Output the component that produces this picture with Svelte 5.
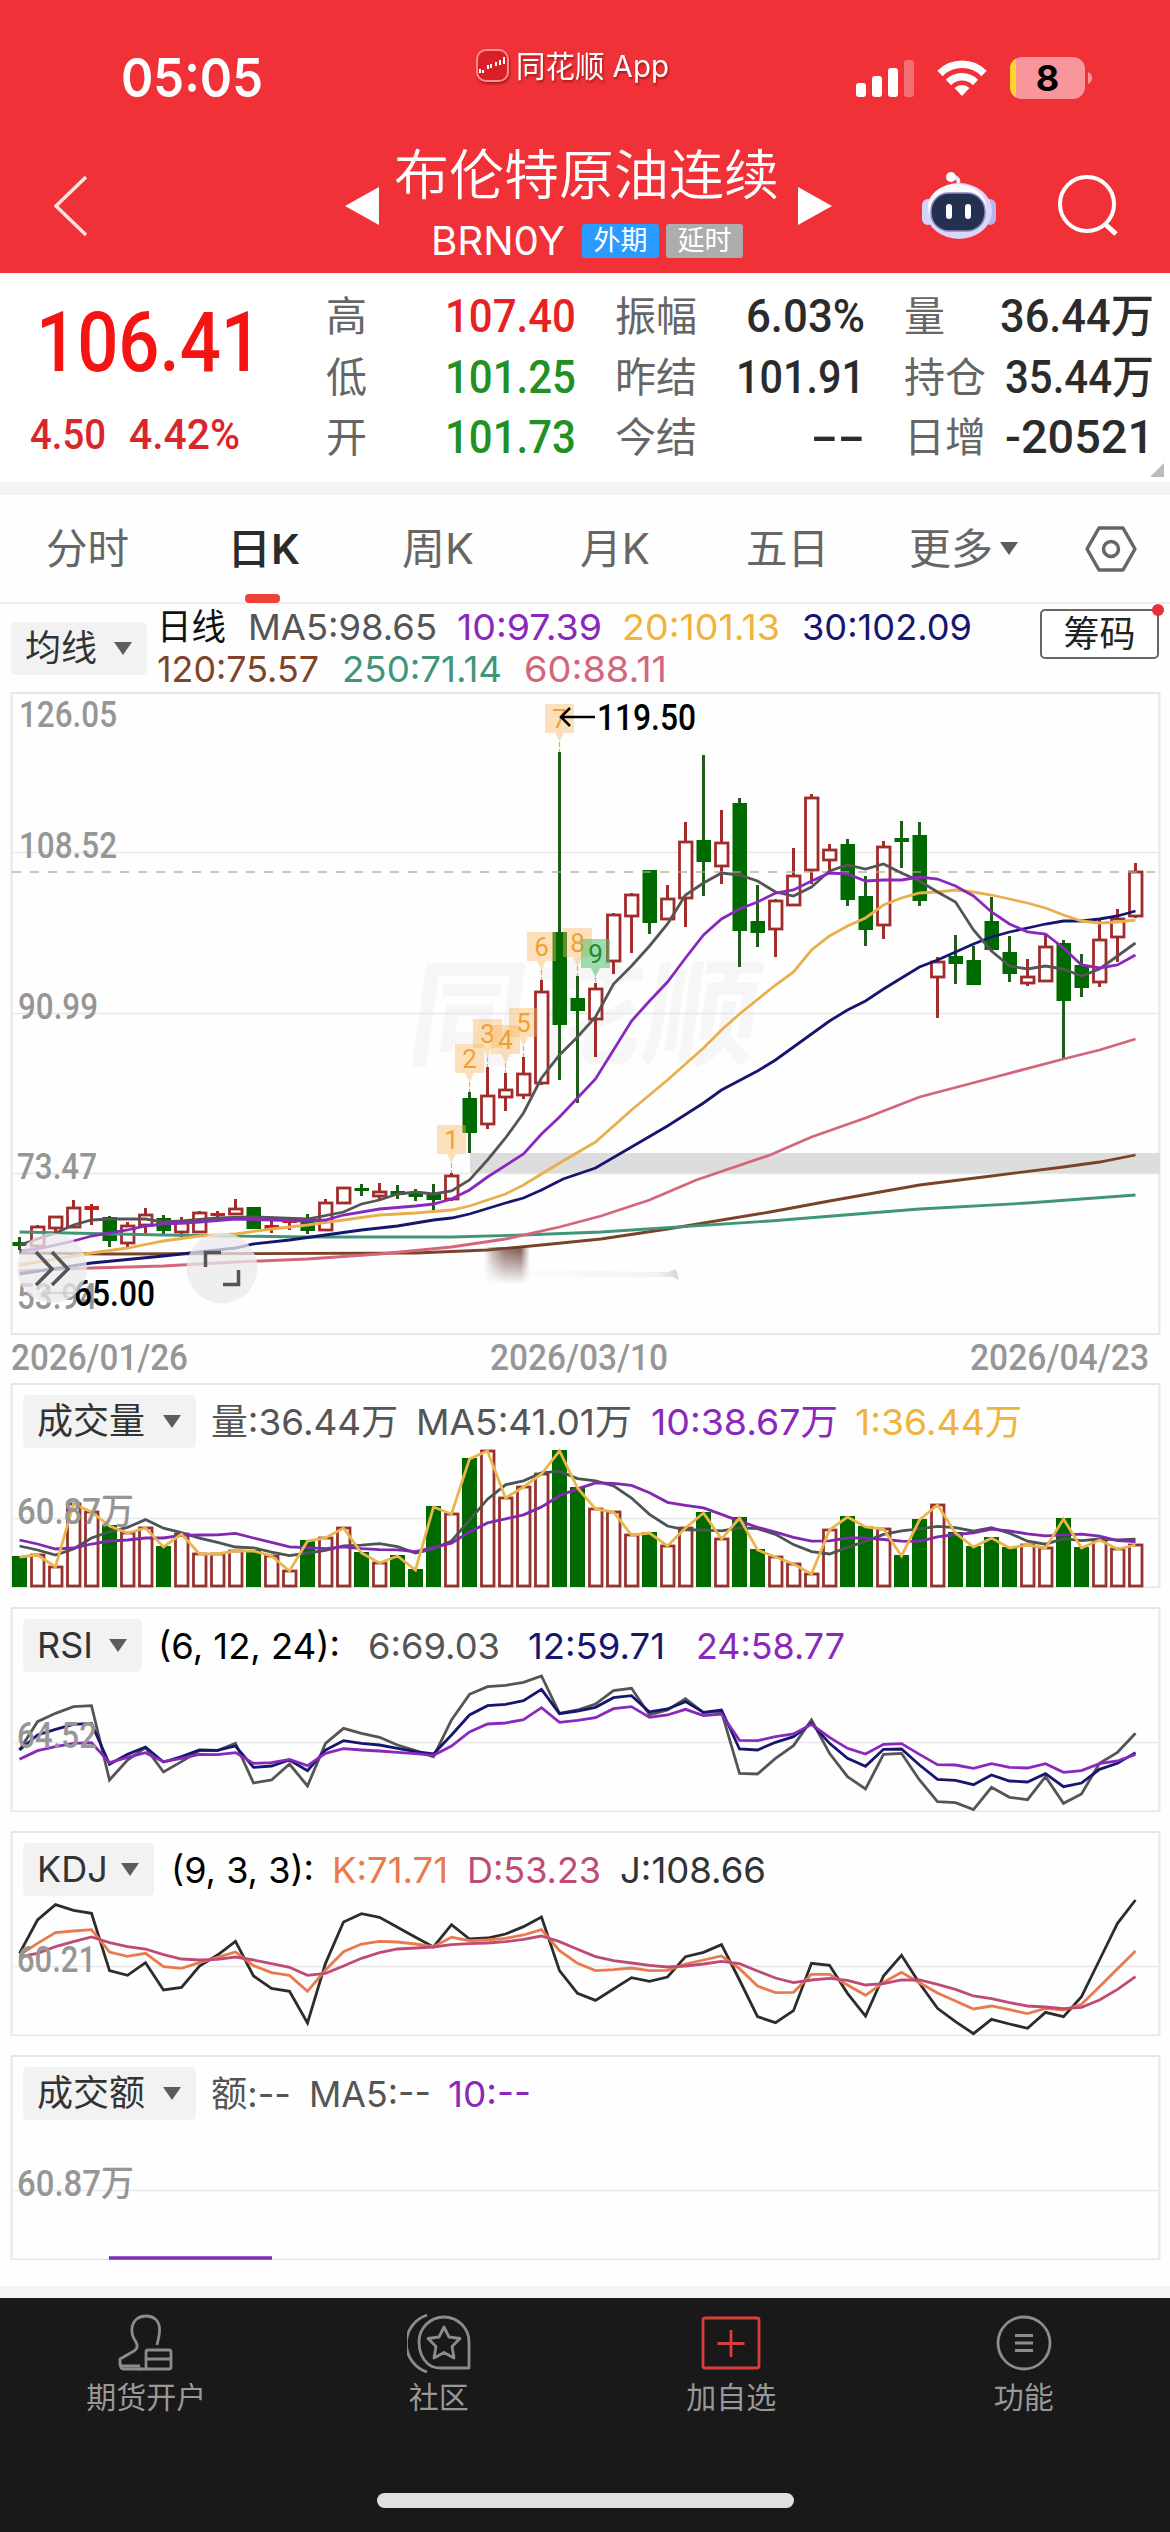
<script lang="ts">
  type Item = [text: string, width: number, color: string, gap: number]

  const FIRST = 19.5
  const STEP = 18
  const cx = (i: number) => FIRST + STEP * i

  // [kind, high, body top, body bottom, low]; r = hollow red, d = solid red, g = green
  const candles: [string, number, number, number, number][] = [
    ['g', 1237, 1242, 1246, 1250], ['r', 1225, 1226, 1246, 1250], ['r', 1216, 1216, 1228, 1232],
    ['r', 1200, 1207, 1227, 1228], ['d', 1204, 1206, 1210, 1225], ['g', 1216, 1217, 1241, 1247],
    ['r', 1222, 1225, 1243, 1249], ['r', 1208, 1214, 1225, 1233], ['g', 1215, 1218, 1231, 1234],
    ['r', 1217, 1222, 1232, 1237], ['r', 1211, 1212, 1232, 1233], ['d', 1211, 1213, 1216, 1219],
    ['r', 1199, 1208, 1214, 1215], ['g', 1207, 1207, 1229, 1229], ['d', 1221, 1225, 1229, 1233],
    ['d', 1217, 1218, 1223, 1230], ['g', 1214, 1218, 1231, 1234], ['r', 1199, 1202, 1230, 1231],
    ['r', 1187, 1187, 1203, 1203], ['g', 1184, 1188, 1191, 1196], ['r', 1183, 1191, 1196, 1200],
    ['g', 1185, 1191, 1195, 1199], ['g', 1189, 1192, 1197, 1201], ['g', 1184, 1193, 1200, 1210],
    ['r', 1173, 1175, 1199, 1201], ['g', 1092, 1098, 1133, 1153], ['r', 1067, 1095, 1124, 1129],
    ['r', 1073, 1089, 1097, 1111], ['r', 1057, 1073, 1095, 1099], ['r', 980, 991, 1083, 1085],
    ['g', 752, 932, 1025, 1080], ['g', 976, 998, 1011, 1103], ['r', 983, 988, 1019, 1057],
    ['r', 913, 914, 961, 974], ['r', 893, 894, 916, 953], ['g', 870, 870, 923, 934],
    ['r', 885, 898, 919, 920], ['r', 822, 841, 898, 927], ['g', 755, 840, 862, 896],
    ['r', 810, 842, 866, 884], ['g', 798, 803, 931, 967], ['g', 885, 921, 933, 947],
    ['r', 899, 900, 929, 957], ['r', 848, 875, 905, 905], ['r', 794, 797, 870, 884],
    ['r', 844, 849, 860, 872], ['g', 839, 844, 900, 906], ['g', 876, 896, 930, 946],
    ['r', 841, 846, 925, 939], ['g', 821, 838, 842, 868], ['g', 822, 835, 901, 906],
    ['r', 957, 961, 977, 1018], ['g', 935, 956, 964, 984], ['g', 946, 960, 985, 985],
    ['g', 897, 921, 950, 951], ['g', 936, 952, 974, 982], ['r', 959, 976, 983, 986],
    ['r', 934, 946, 981, 982], ['g', 940, 943, 1001, 1058], ['g', 954, 965, 988, 997],
    ['r', 919, 939, 982, 987], ['r', 909, 918, 937, 962], ['r', 863, 871, 916, 918],
  ]

  // sparse [index, y] pairs
  const averages: { color: string; pts: [number, number][] }[] = [
    { color: '#7a4229', pts: [[0, 1253], [5, 1254], [22, 1253], [26, 1250], [29, 1245], [32.3, 1239], [36, 1229], [41.7, 1212], [45, 1201], [50, 1185], [54, 1176], [58, 1167], [60, 1162], [62, 1155]] },
    { color: '#3f9578', pts: [[0, 1232], [8, 1235], [16, 1237], [24, 1237], [28, 1235], [32.3, 1232], [41.7, 1221], [50, 1209], [56, 1203], [62, 1195]] },
    { color: '#d4667c', pts: [[0, 1271], [4, 1268], [8, 1266], [12, 1262], [16, 1259], [20, 1254], [24, 1247], [27, 1239], [30, 1227], [32.3, 1216], [35, 1200], [37.6, 1180], [41.7, 1155], [44, 1137], [47, 1118], [50, 1097], [54, 1078], [58, 1059], [60, 1050], [62, 1039]] },
    { color: '#16166e', pts: [[0, 1274], [4, 1263], [8, 1256], [12, 1248], [13, 1244], [15, 1240], [17, 1235], [19, 1230], [21, 1226], [23, 1220], [24, 1218], [25, 1214], [27, 1203], [28, 1198], [29, 1190], [30.2, 1179], [32, 1168], [34, 1147], [36, 1126], [38, 1103], [39, 1090], [41, 1071], [42, 1060], [43, 1047], [44, 1034], [45, 1021], [46, 1010], [47, 1001], [48, 989], [49, 978], [50, 967], [51, 960], [52, 952], [53, 944], [54, 937], [55, 932], [56, 928], [57, 924], [58, 921], [59, 921], [60, 919], [61, 916], [62, 911]] },
    { color: '#e8b04c', pts: [[0, 1265], [2, 1259], [4, 1253], [6, 1248], [8, 1241], [10, 1236], [12, 1234], [14, 1229], [16, 1225], [18, 1220], [20, 1215], [22, 1213], [24, 1210], [25, 1206], [27, 1194], [28, 1185], [30, 1163], [32, 1142], [34, 1110], [36, 1080], [38, 1048], [39, 1030], [40, 1014], [42, 985], [43, 972], [44, 950], [45, 936], [46, 926], [47, 918], [48, 905], [49, 898], [50, 893], [51, 892], [52, 890], [53, 892], [54, 895], [55, 899], [56, 903], [57, 908], [58, 915], [59, 921], [60, 923], [61, 922], [62, 920]] },
    { color: '#555', pts: [[0, 1245], [2, 1233], [3, 1225], [4, 1220], [5, 1219], [7, 1219], [8, 1222], [9, 1221], [11, 1218], [13, 1217], [16, 1219], [18, 1212], [19, 1204], [20, 1200], [21, 1194], [22, 1192], [23, 1194], [24, 1191], [25, 1180], [26, 1160], [27, 1138], [28, 1113], [29, 1078], [30, 1055], [31, 1037], [32, 1017], [33, 984], [34, 966], [35, 946], [36, 924], [37, 895], [38, 883], [39, 873], [40, 875], [41, 881], [42, 892], [43, 896], [44, 887], [45, 871], [46, 865], [47, 869], [48, 864], [49, 873], [50, 881], [51, 892], [52, 902], [53, 930], [54, 951], [55, 966], [56, 969], [57, 966], [58, 969], [59, 976], [60, 969], [61, 956], [62, 943]] },
    { color: '#8a28bd', pts: [[0, 1251], [1, 1249], [2, 1245], [3, 1241], [4, 1236], [6, 1230], [7, 1226], [8, 1224], [10, 1222], [12, 1219], [14, 1220], [16, 1221], [17, 1220], [18, 1215], [20, 1209], [22, 1206], [23, 1204], [24, 1199], [25, 1190], [26, 1177], [28, 1154], [29, 1134], [30, 1117], [31, 1098], [32, 1079], [33, 1050], [34, 1021], [35, 1001], [36, 982], [37, 958], [38, 935], [39, 919], [40, 909], [41, 902], [42, 893], [43, 890], [44, 881], [45, 873], [46, 874], [47, 881], [48, 880], [49, 880], [50, 877], [51, 879], [52, 886], [53, 896], [54, 912], [55, 924], [56, 932], [57, 934], [58, 948], [59, 965], [60, 968], [61, 965], [62, 955]] },
  ]

  const volTops = [
    1556, 1554, 1566, 1503, 1511, 1525, 1532, 1527, 1546, 1533, 1553, 1553, 1550, 1550, 1555, 1570, 1540, 1537, 1527, 1552, 1562,
    1555, 1569, 1506, 1513, 1458, 1450, 1497, 1486, 1473, 1450, 1487, 1508, 1511, 1534, 1532, 1545, 1527, 1512, 1538, 1517, 1549,
    1556, 1563, 1573, 1529, 1516, 1526, 1528, 1555, 1519, 1504, 1532, 1546, 1537, 1547, 1544, 1547, 1518, 1547, 1539, 1548, 1544,
  ]
  const VOL_BASE = 1587

  const rsi = [
    { color: '#555', v: [450, 365, 340, 320, 317, 540, 480, 443, 516, 485, 452, 452, 430, 549, 540, 492, 558, 430, 385, 400, 412, 435, 452, 470, 360, 283, 260, 256, 247, 228, 340, 330, 312, 272, 265, 345, 330, 296, 338, 335, 520, 522, 475, 437, 360, 460, 530, 567, 463, 460, 540, 605, 608, 629, 562, 592, 599, 530, 610, 582, 490, 457, 400] },
    { color: '#16166e', v: [450, 405, 388, 373, 370, 493, 463, 441, 486, 470, 450, 451, 438, 502, 498, 480, 512, 450, 422, 430, 435, 445, 455, 462, 405, 345, 317, 313, 302, 268, 341, 333, 322, 293, 287, 336, 327, 305, 337, 330, 447, 450, 427, 410, 370, 430, 475, 499, 448, 447, 495, 538, 541, 554, 525, 543, 546, 521, 560, 549, 508, 490, 458] },
    { color: '#8a28bd', v: [478, 452, 440, 430, 428, 488, 472, 458, 485, 475, 463, 464, 458, 490, 488, 478, 497, 460, 446, 450, 453, 457, 461, 466, 438, 396, 372, 369, 359, 323, 367, 361, 353, 326, 320, 352, 345, 328, 347, 342, 421, 422, 410, 402, 373, 412, 445, 462, 433, 431, 463, 494, 495, 505, 491, 502, 504, 491, 517, 512, 491, 483, 463] },
  ]
  const kdj = [
    { color: '#2c2c2c', v: [400, 300, 254, 271, 280, 452, 466, 428, 510, 502, 438, 405, 364, 468, 505, 514, 609, 430, 306, 281, 292, 322, 352, 381, 314, 357, 354, 342, 320, 291, 452, 520, 541, 507, 473, 484, 471, 410, 397, 374, 480, 590, 608, 572, 430, 436, 520, 588, 468, 406, 490, 565, 605, 641, 598, 612, 625, 577, 590, 530, 420, 310, 240] },
    { color: '#e87a4c', v: [405, 370, 338, 333, 329, 396, 409, 400, 440, 445, 428, 412, 396, 437, 458, 466, 514, 450, 395, 372, 364, 366, 372, 380, 352, 362, 360, 355, 345, 329, 392, 430, 452, 449, 444, 452, 451, 432, 420, 408, 446, 498, 518, 517, 463, 463, 495, 526, 487, 457, 488, 519, 543, 567, 558, 569, 581, 565, 570, 553, 500, 446, 393] },
    { color: '#c04a76', v: [410, 400, 380, 365, 351, 368, 380, 387, 404, 417, 420, 418, 411, 420, 431, 442, 466, 460, 438, 415, 398, 387, 384, 381, 374, 371, 369, 365, 358, 348, 365, 388, 410, 422, 429, 436, 441, 438, 432, 424, 431, 453, 474, 488, 480, 475, 481, 495, 491, 480, 480, 493, 508, 528, 536, 548, 558, 561, 566, 562, 540, 508, 470] },
  ]

  const markers: [string, number, number][] = [
    ['1', 24, 1125], ['2', 25, 1044], ['3', 26, 1019], ['4', 27, 1025], ['5', 28, 1008],
    ['6', 29, 932], ['7', 30, 704], ['8', 31, 928], ['9', 32, 939],
  ]

  const line = (pts: [number, number][]) => pts.map(([i, y]) => `${cx(i)},${y}`).join(' ')
  const series = (v: number[], top: number) => v.map((y, i) => `${cx(i)},${top + y / 3}`).join(' ')

  function mean(n: number, seed: number[]) {
    return volTops
      .map((_, i) => {
        const y = i < seed.length ? seed[i] : volTops.slice(i - n + 1, i + 1).reduce((a, b) => a + b, 0) / n
        return `${cx(i)},${y}`
      })
      .join(' ')
  }
  const volMa5 = mean(5, [1546, 1550, 1555, 1549])
  const volMa10 = mean(10, [1540, 1544, 1549, 1548, 1544, 1541, 1540, 1538, 1538])

  const legend1: Item[] = [
    ['日线', 69, '#111', 0], ['MA5:98.65', 189, '#555', 22], ['10:97.39', 145, '#8a28bd', 20],
    ['20:101.13', 158, '#f0b43c', 20], ['30:102.09', 170, '#16166e', 22],
  ]
  const legend2: Item[] = [
    ['120:75.57', 162, '#7f4426', 0], ['250:71.14', 160, '#3f9578', 23], ['60:88.11', 143, '#d4667c', 22],
  ]

  const stats: [string, string, number, string][][] = [
    [['高', '107.40', 131, '#e42322'], ['低', '101.25', 131, '#229022'], ['开', '101.73', 131, '#229022']],
    [['振幅', '6.03%', 119, '#2b2b2b'], ['昨结', '101.91', 129, '#2b2b2b'], ['今结', '--', 54, '#2b2b2b']],
    [['量', '36.44万', 154, '#2b2b2b'], ['持仓', '35.44万', 149, '#2b2b2b'], ['日增', '-20521', 149, '#2b2b2b']],
  ]

  const tabs: [string, number, number][] = [
    ['分时', 83, 46], ['日K', 72, 98], ['周K', 72, 103], ['月K', 70, 106], ['五日', 83, 96], ['更多', 84, 80],
  ]

  const panels: { id: string; name: string; w: number; label: string; lw: number; top: number; items: Item[] }[] = [
    { id: 'vol', name: '成交量', w: 173, label: '60.87万', lw: 117, top: 1383, items: [['量:36.44万', 187, '#555', 15], ['MA5:41.01万', 216, '#555', 18], ['10:38.67万', 187, '#8a28bd', 19], ['1:36.44万', 167, '#f0b43c', 17]] },
    { id: 'rsi', name: 'RSI', w: 119, label: '64.52', lw: 80, top: 1607, items: [['(6, 12, 24):', 182, '#000', 16], ['6:69.03', 132, '#555', 28], ['12:59.71', 137, '#16166e', 28], ['24:58.77', 149, '#8a28bd', 31]] },
    { id: 'kdj', name: 'KDJ', w: 131, label: '60.21', lw: 79, top: 1831, items: [['(9, 3, 3):', 143, '#000', 17], ['K:71.71', 116, '#e87a4c', 18], ['D:53.23', 134, '#c04a76', 19], ['J:108.66', 146, '#333', 19]] },
    { id: 'amt', name: '成交额', w: 173, label: '60.87万', lw: 117, top: 2055, items: [['额:--', 80, '#555', 15], ['MA5:--', 122, '#555', 18], ['10:--', 83, '#8a28bd', 17]] },
  ]
</script>

{#snippet fit(text: string, w: number, size: number, color: string, cls = '')}
  <svg class="fit {cls}" width={w} height={size}>
    <text x="0" y={size * 0.856} font-size={size} fill={color} textLength={w} lengthAdjust="spacingAndGlyphs">{text}</text>
  </svg>
{/snippet}

{#snippet din(text: string, x: number, y: number, w: number, cls = 'axis')}
  <text class="din {cls}" {x} {y} textLength={w} lengthAdjust="spacingAndGlyphs">{text}</text>
{/snippet}

{#snippet legend(items: Item[])}
  {#each items as [text, w, color, gap]}
    <span style:margin-left="{gap}px">{@render fit(text, w, 36, color)}</span>
  {/each}
{/snippet}

{#snippet picker(name: string, w: number)}
  <button class="picker" style:width="{w}px">{name}<i class="caret"></i></button>
{/snippet}

<div class="page">
  <header>
    <div class="status">
      <span class="time">{@render fit('05:05', 142, 53, '#fff', 'semi')}</span>
      <span class="brand">
        <svg width="34" height="34" viewBox="0 0 34 34">
          <rect x="1" y="1" width="31" height="31" rx="9" fill="#d92027" stroke="#ff8d8d" stroke-width="2" />
          <path d="M4 20v4m3-3v3m5-8v4m3-5v4m5-6v4m4-6v5m4-8v7" stroke="#fff" stroke-width="2" />
        </svg>
        {@render fit('同花顺 App', 153, 30, '#fff')}
      </span>
      <svg class="signal" width="58" height="38" viewBox="0 0 58 38" fill="#fff">
        <rect x="0" y="24" width="10" height="14" rx="3" />
        <rect x="16" y="17" width="10" height="21" rx="3" />
        <rect x="32" y="9" width="10" height="29" rx="3" />
        <rect x="48" y="1" width="10" height="37" rx="3" opacity=".3" />
      </svg>
      <svg class="wifi" width="50" height="38" viewBox="0 0 50 38" fill="none" stroke="#fff" stroke-width="7.5">
        <path d="M3 14.500a31 31 0 0 1 44 0" />
        <path d="M11.500 23.500a19 19 0 0 1 27 0" />
        <path d="M25 37l-7.500-8a11 11 0 0 1 15 0z" fill="#fff" stroke="none" />
      </svg>
      <svg class="battery" width="82" height="42" viewBox="0 0 82 42">
        <rect width="75" height="42" rx="12" fill="#f9969b" />
        <path d="M6 1.500Q0 5 0 12v18q0 7 6 10.500z" fill="#ffd629" />
        <path d="M78 15q4 2 4 6t-4 6z" fill="#f9969b" />
        <text x="37.500" y="34" text-anchor="middle">8</text>
      </svg>
    </div>
    <nav>
      <svg class="back" width="34" height="62" viewBox="0 0 34 62"><path d="M32 2L2 31l30 29" fill="none" stroke="#ffe4e4" stroke-width="3.500" /></svg>
      <svg class="prev" width="34" height="38"><path d="M0 19L34 0v38z" fill="#fff" /></svg>
      <div class="title">
        {@render fit('布伦特原油连续', 385, 54, '#fff', 'thin')}
        <div class="code">
          {@render fit('BRN0Y', 134, 40, '#fff')}
          <span class="tag blue">外期</span>
          <span class="tag">延时</span>
        </div>
      </div>
      <svg class="next" width="34" height="38"><path d="M34 19L0 0v38z" fill="#fff" /></svg>
      <svg class="robot" width="74" height="68" viewBox="0 0 74 68">
        <path d="M36 14q2-8-4-9" fill="none" stroke="#e9e6fb" stroke-width="4" />
        <circle cx="29" cy="5" r="5" fill="#fff" />
        <rect x="0" y="27" width="12" height="26" rx="6" fill="#d3d3fb" />
        <rect x="62" y="27" width="12" height="26" rx="6" fill="#b9b3ee" />
        <ellipse cx="37" cy="39" rx="33" ry="28" fill="#d9d6f8" />
        <ellipse cx="35" cy="35" rx="29" ry="23" fill="#fbfaff" />
        <rect x="9" y="21" width="54" height="38" rx="18" fill="#24304f" stroke="#8c86c8" stroke-width="1.500" />
        <path d="M27 35v9M46 35v9" stroke="#fff" stroke-width="6" stroke-linecap="round" />
      </svg>
      <svg class="search" width="62" height="62" viewBox="0 0 62 62" fill="none" stroke="#fff" stroke-width="4">
        <circle cx="30" cy="29" r="27" /><path d="M48 49l11 10" stroke-width="5" />
      </svg>
    </nav>
  </header>

  <section class="quote">
    <div class="last">
      {@render fit('106.41', 226, 83, '#f51414', 'med')}
      <div class="change">
        {@render fit('4.50', 76, 43, '#d8262a', 'med')}
        {@render fit('4.42%', 111, 43, '#d8262a', 'med')}
      </div>
    </div>
    {#each stats as col}
      <dl>
        {#each col as [name, value, w, color]}
          <div class="stat"><dt>{name}</dt><dd>{@render fit(value, w, 46, color, 'med')}</dd></div>
        {/each}
      </dl>
    {/each}
    <i class="corner"></i>
  </section>

  <div class="tabs">
    {#each tabs as [name, w, gap], i}
      <span class="tab" class:active={i === 1} style:margin-left="{gap}px">
        {@render fit(name, w, 42, i === 1 ? '#2b2b2b' : '#666', i === 1 ? 'med' : '')}
      </span>
    {/each}
    <i class="caret"></i>
    <svg class="hex" width="54" height="48" viewBox="0 0 54 48" fill="none" stroke="#666" stroke-width="3.500">
      <path d="M15 3h24l12 21-12 21H15L3 24z" stroke-linejoin="round" /><circle cx="27" cy="24" r="7.500" />
    </svg>
  </div>

  <div class="ma">
    {@render picker('均线', 136)}
    <div class="lines">
      <div class="row">{@render legend(legend1)}</div>
      <div class="row">{@render legend(legend2)}</div>
    </div>
    <button class="chips">筹码<i class="dot"></i></button>
  </div>

  <svg class="kline" width="1170" height="691" viewBox="0 692 1170 691">
    <defs>
      <linearGradient id="smear">
        <stop offset="0" stop-color="#6b4a40" stop-opacity="0" />
        <stop offset=".2" stop-color="#6b4a40" stop-opacity=".4" />
        <stop offset=".45" stop-color="#6b3f33" stop-opacity=".7" />
        <stop offset=".8" stop-color="#5e3427" stop-opacity=".75" />
        <stop offset="1" stop-color="#6b4a40" stop-opacity="0" />
      </linearGradient>
      <linearGradient id="trail">
        <stop offset="0" stop-color="#777" stop-opacity=".02" />
        <stop offset=".85" stop-color="#777" stop-opacity=".08" />
        <stop offset="1" stop-color="#777" stop-opacity=".3" />
      </linearGradient>
      <linearGradient id="fall" x2="0" y2="1">
        <stop offset=".1" stop-color="#fff" /><stop offset="1" stop-color="#000" />
      </linearGradient>
      <mask id="fade"><rect x="480" y="1247" width="205" height="37" fill="url(#fall)" /></mask>
    </defs>
    <text class="ghost" x="0" y="0" transform="translate(405 1056) skewX(-8)" textLength="350">同花顺</text>
    <rect class="frame" x="11.500" y="693" width="1148" height="641" />
    <path class="grid" d="M12 852.500H1160M12 1013.500H1160M12 1173.500H1160" />
    <rect x="470" y="1153" width="690" height="20" fill="#ddd" />
    {@render din('126.05', 19, 727, 98)}
    {@render din('108.52', 19, 858, 98)}
    {@render din('90.99', 18, 1019, 80)}
    {@render din('73.47', 17, 1179, 80)}
    {@render din('53.94', 17, 1309, 80)}
    {@render din('2026/01/26', 11, 1370, 177)}
    {@render din('2026/03/10', 490, 1370, 178)}
    {@render din('2026/04/23', 970, 1370, 179)}

    {#each candles as [kind, high, top, bottom, low], i}
      <g class="candle {kind}">
        <path d="M{cx(i)} {high}V{top}M{cx(i)} {bottom}V{low}" />
        {#if kind === 'r'}
          <rect x={cx(i) - 6} y={top + 1} width="12.500" height={Math.max(bottom - top - 1, 2)} />
        {:else}
          <rect x={cx(i) - 7} y={top} width="14.500" height={bottom - top} />
        {/if}
      </g>
    {/each}
    <path d="M12 872H1160" stroke="#a9b083" stroke-width="1.500" stroke-dasharray="9 9" opacity=".85" />

    {#each averages as ma}
      <polyline class="curve" points={line(ma.pts)} stroke={ma.color} />
    {/each}

    <rect x="484" y="1247" width="46" height="37" fill="url(#smear)" mask="url(#fade)" />
    <path d="M528 1270l140 2 8-3 3 11-6-3H528z" fill="url(#trail)" />

    {#each markers as [n, i, top]}
      <g class="marker" class:nine={n === '9'}>
        <path d="M{cx(i) - 14.500} {top}h29v29h-10l-4.500 9l-4.500 -9h-10z" />
        <path class="stem" d="M{cx(i)} {top + 38}V{candles[i][1]}" />
        <text x={cx(i)} y={top + 24} text-anchor="middle">{n}</text>
      </g>
    {/each}

    <path d="M595 717H562M570 708l-9 9 9 9" fill="none" stroke="#000" stroke-width="2.500" />
    {@render din('119.50', 597, 730, 99, 'strong')}

    <path d="M75 1293H42M50 1286l-8 7 8 7" fill="none" stroke="#555" stroke-width="2" opacity=".6" />
    {@render din('65.00', 74, 1306, 81, 'strong')}
    <circle class="fab" cx="52" cy="1268" r="35" />
    <path class="fab-icon" d="M36 1252l16 17-16 16M52 1252l16 17-16 16" />
    <circle class="fab" cx="222" cy="1268" r="35.500" />
    <path class="fab-icon" d="M205.500 1267V1252.500H221M223 1284.500H238.500V1270" />
  </svg>

  {#each panels as p}
    <section class="panel">
      <svg class="plot" width="1170" height="205" viewBox="0 {p.top} 1170 205">
        <rect class="frame" x="11.500" y={p.top + 1} width="1148" height="203.500" />
        <path class="grid" d="M12 {p.top + 135.5}H1160" />
        {#if p.id === 'vol'}
          {#each volTops as y, i}
            {#if candles[i][0] === 'g'}
              <rect x={cx(i) - 7.5} {y} width="15" height={VOL_BASE - y} fill="#006a00" />
            {:else}
              <rect class="bar" x={cx(i) - 6} y={y + 1} width="12.500" height={VOL_BASE - y - 2} />
            {/if}
          {/each}
          <polyline class="curve" points={volMa5} stroke="#4c5553" />
          <polyline class="curve" points={volMa10} stroke="#8028b0" />
          <polyline class="curve" points={volTops.map((y, i) => `${cx(i)},${y + 1}`).join(' ')} stroke="#eab54a" />
        {:else if p.id === 'rsi'}
          {#each rsi as s}<polyline class="curve" points={series(s.v, 1600)} stroke={s.color} />{/each}
        {:else if p.id === 'kdj'}
          {#each kdj as s}<polyline class="curve" points={series(s.v, 1820)} stroke={s.color} />{/each}
        {:else}
          <path d="M109 2258H272" stroke="#7d2fb0" stroke-width="3.500" />
        {/if}
        {@render din(p.label, 17, p.top + 141, p.lw)}
      </svg>
      <div class="panel-head">
        {@render picker(p.name, p.w)}
        {@render legend(p.items)}
      </div>
    </section>
  {/each}

  <footer>
    <a href="#open">
      <svg width="60" height="60" viewBox="0 0 60 60">
        <path d="M24 53H7q-3 0-3-3v-4l14-8q5-3 2-9-5-7-4-14C17 7 23 3 30 3s13 4 13.500 12c.500 7-1.500 12-2.500 17" />
        <rect x="30" y="37" width="25" height="19" rx="2" /><path d="M30 46h25M24 56h8" /><path d="M4 50q0 6 4 6h18" />
      </svg>
      期货开户
    </a>
    <a href="#club">
      <svg width="64" height="60" viewBox="0 0 64 60">
        <path d="M20 2A30 30 0 0 0 20 59" />
        <path d="M62 55V29A25 25 0 0 0 12 29q0 14 9 22 5 4 12 4z" />
        <path d="M37 14l5 10 11 1.500-8 8 2 11.500-10-5.500L27 45l2-11.500-8-8L32 24z" />
      </svg>
      社区
    </a>
    <a href="#add">
      <svg class="add" width="60" height="60" viewBox="0 0 60 60">
        <rect x="2" y="5" width="56" height="50" rx="2" /><path d="M30 17v27M16.500 30.500h27" />
      </svg>
      加自选
    </a>
    <a href="#menu">
      <svg width="60" height="60" viewBox="0 0 60 60"><circle cx="30" cy="30" r="26" /><path d="M21 22.500h18M21 30h18M21 37.500h18" /></svg>
      功能
    </a>
    <i class="home"></i>
  </footer>
</div>

<style>
  :global(body) {
    margin: 0;
    background: #fff;
  }
  .page {
    width: 1170px;
    height: 2532px;
    overflow: hidden;
    display: flex;
    flex-direction: column;
    background: #fefefe;
    font-family: Inter, 'Noto Sans CJK SC', sans-serif;
  }
  svg {
    display: block;
    flex-shrink: 0;
  }
  .fit {
    overflow: visible;
  }
  .semi {
    font-weight: 600;
  }
  .med {
    font-family: Roboto, 'Noto Sans CJK SC', sans-serif;
    font-weight: 500;
  }
  .thin {
    font-weight: 350;
  }
  button {
    font: inherit;
    border: 0;
    padding: 0;
  }

  header {
    height: 273px;
    background: #f03137;
  }
  .status {
    display: flex;
    align-items: center;
    height: 104px;
    padding-top: 26px;
  }
  .time {
    margin-left: 121px;
  }
  .brand {
    display: flex;
    align-items: center;
    gap: 6px;
    margin: 0 0 25px 213px;
    filter: drop-shadow(1px 2px 1px rgba(90, 0, 0, 0.5));
  }
  .signal {
    margin-left: 187px;
  }
  .wifi,
  .battery {
    margin-left: 23px;
  }
  .battery {
    overflow: visible;
  }
  .battery text {
    font: 700 36px Inter, sans-serif;
  }
  nav {
    display: flex;
    align-items: center;
    height: 143px;
  }
  nav > svg {
    margin-top: 8px;
  }
  .back {
    margin-left: 54px;
  }
  .prev {
    margin-left: 257px;
  }
  .title {
    width: 385px;
    margin: 7px 0 0 15px;
  }
  .code {
    display: flex;
    align-items: center;
    gap: 7px;
    height: 42px;
    margin: 17px 0 0 37px;
  }
  .tag {
    width: 77px;
    height: 34px;
    line-height: 33px;
    border-radius: 3px;
    background: #adadad;
    color: #fff;
    font-size: 27px;
    text-align: center;
  }
  .tag.blue {
    margin-left: 10px;
    background: #2a9cff;
  }
  .next {
    margin-left: 19px;
  }
  .robot {
    margin-left: 90px;
  }
  .search {
    margin-left: 61px;
  }

  .quote {
    position: relative;
    display: flex;
    height: 209px;
    box-sizing: border-box;
    padding-top: 13px;
    background: #fff;
  }
  .last {
    width: 326px;
    flex-shrink: 0;
    padding-top: 14px;
  }
  .last > :global(svg) {
    margin-left: 36px;
  }
  .change {
    display: flex;
    gap: 23px;
    margin: 29px 0 0 30px;
  }
  dl {
    width: 250px;
    flex-shrink: 0;
    margin: 0 39px 0 0;
  }
  dl:last-of-type {
    margin-right: 0;
  }
  .stat {
    display: flex;
    align-items: center;
    justify-content: space-between;
    height: 60.5px;
  }
  dt {
    font-size: 41px;
    line-height: 60px;
    color: #666;
  }
  dd {
    margin: 0;
  }
  .corner {
    position: absolute;
    right: 6px;
    bottom: 5px;
    border: 7px solid transparent;
    border-right-color: #bbb;
    border-bottom-color: #bbb;
  }

  .tabs {
    display: flex;
    align-items: center;
    height: 107px;
    border-top: 13px solid #f4f4f4;
    border-bottom: 2px solid #ededed;
  }
  .tab {
    position: relative;
  }
  .tab.active::after {
    content: '';
    position: absolute;
    left: 18px;
    top: 66px;
    width: 35px;
    height: 9px;
    border-radius: 4px;
    background: #f04038;
  }
  .caret {
    border: 9px solid transparent;
    border-top: 13px solid #5c5c5c;
    border-bottom: 0;
  }
  .tabs .caret {
    margin-left: 7px;
  }
  .hex {
    margin-left: 66px;
  }

  .ma {
    display: flex;
    height: 88px;
  }
  .picker {
    display: flex;
    align-items: center;
    justify-content: space-between;
    flex-shrink: 0;
    height: 53px;
    box-sizing: border-box;
    padding: 0 15px 0 14px;
    border-radius: 5px;
    background: #f2f2f2;
    color: #333;
    font-size: 36px;
    line-height: 53px;
  }
  .ma .picker {
    margin: 18px 0 0 11px;
  }
  .lines {
    display: flex;
    flex-direction: column;
    gap: 6px;
    width: 893px;
    padding: 5px 0 0 10px;
    box-sizing: border-box;
  }
  .row {
    display: flex;
  }
  .chips {
    position: relative;
    width: 119px;
    height: 50px;
    margin-top: 5px;
    border: 2px solid #666;
    border-radius: 5px;
    background: #fff;
    color: #222;
    font-size: 36px;
    line-height: 44px;
  }
  .dot {
    position: absolute;
    top: -7px;
    right: -7px;
    width: 12px;
    height: 12px;
    border-radius: 50%;
    background: #e8303a;
  }

  .frame {
    fill: none;
    stroke: #e6e6e6;
    stroke-width: 2;
  }
  .grid {
    stroke: #e8e8e8;
    stroke-width: 1.5;
  }
  .din {
    font: 500 36px Roboto, 'Noto Sans CJK SC', sans-serif;
  }
  .axis {
    fill: #969696;
  }
  .strong {
    fill: #000;
  }
  .ghost {
    font: 700 116px 'Noto Sans CJK SC', sans-serif;
    fill: #f6f6f6;
  }
  .candle path {
    stroke-width: 3;
  }
  .r,
  .d {
    stroke: #a02c2c;
  }
  .r rect {
    fill: #fff;
    stroke-width: 2.8;
  }
  .d rect {
    fill: #c81e1e;
    stroke: none;
  }
  .g path {
    stroke: #1f5c1a;
  }
  .g rect {
    fill: #006a00;
  }
  .curve {
    fill: none;
    stroke-width: 2.8;
  }
  .bar {
    fill: #fff;
    stroke: #963230;
    stroke-width: 2.8;
  }
  .marker path {
    fill: #fbb860;
    fill-opacity: 0.42;
  }
  .marker .stem {
    stroke: #e8a860;
    stroke-width: 1.2;
    stroke-dasharray: 5 2;
  }
  .marker text {
    font: 400 26px Roboto, sans-serif;
    fill: #f0a030;
  }
  .nine path {
    fill: #4fc06a;
    fill-opacity: 0.55;
  }
  .nine text {
    fill: #1f8a30;
  }
  .fab {
    fill: #e9e9ec;
    fill-opacity: 0.75;
  }
  .fab-icon {
    fill: none;
    stroke: #555;
    stroke-width: 3.5;
  }

  .panel {
    display: grid;
    height: 205px;
    margin-bottom: 19px;
  }
  .plot,
  .panel-head {
    grid-area: 1 / 1;
  }
  .panel-head {
    display: flex;
    align-items: center;
    height: 53px;
    margin: 12px 0 0 23px;
  }

  footer {
    display: flex;
    flex-wrap: wrap;
    align-content: flex-start;
    flex: 1;
    margin-top: 7px;
    padding: 15px 0 0 0;
    border-top: 12px solid #f5f5f3;
    background: #191919;
  }
  footer a {
    display: flex;
    flex-direction: column;
    align-items: center;
    gap: 1px;
    width: 292.5px;
    height: 180px;
    color: #989898;
    font-size: 30px;
    line-height: 46px;
    text-decoration: none;
  }
  footer svg {
    fill: none;
    stroke: #8c8c8c;
    stroke-width: 2.8;
    stroke-linejoin: round;
  }
  footer .add {
    stroke: #d8403f;
  }
  .home {
    width: 417px;
    height: 15px;
    margin: 0 auto;
    border-radius: 8px;
    background: #e0e0e0;
  }
</style>
